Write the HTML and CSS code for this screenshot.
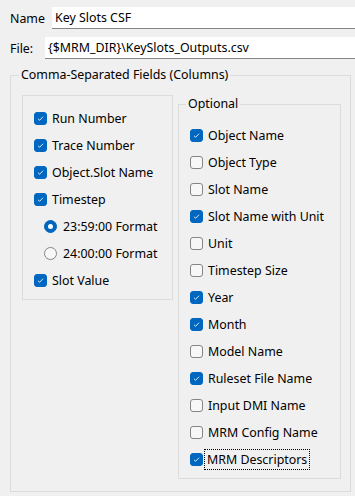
FILE: index.html
```html
<!DOCTYPE html>
<html>
<head>
<meta charset="utf-8">
<link rel="stylesheet" href="styles.css">
</head>
<body>
<div class="form-row name-row">
  <label class="lbl name-lbl">Name</label>
  <div class="input">Key Slots CSF</div>
</div>
<div class="form-row file-row">
  <label class="lbl file-lbl">File:</label>
  <div class="input">{$MRM_DIR}\KeySlots_Outputs.csv</div>
</div>
<fieldset class="outer">
  <legend>Comma-Separated Fields (Columns)</legend>
  <div class="cols">
    <div class="box left">
      <div class="item"><span class="cb on"><svg viewBox="0 0 13 13"><path d="M3.5 6.8 L5.5 8.6 L9.5 4.4"/></svg></span><span>Run Number</span></div>
      <div class="item"><span class="cb on"><svg viewBox="0 0 13 13"><path d="M3.5 6.8 L5.5 8.6 L9.5 4.4"/></svg></span><span>Trace Number</span></div>
      <div class="item"><span class="cb on"><svg viewBox="0 0 13 13"><path d="M3.5 6.8 L5.5 8.6 L9.5 4.4"/></svg></span><span>Object.Slot Name</span></div>
      <div class="item"><span class="cb on"><svg viewBox="0 0 13 13"><path d="M3.5 6.8 L5.5 8.6 L9.5 4.4"/></svg></span><span>Timestep</span></div>
      <div class="item sub"><span class="rb on"></span><span>23:59:00 Format</span></div>
      <div class="item sub"><span class="rb"></span><span>24:00:00 Format</span></div>
      <div class="item"><span class="cb on"><svg viewBox="0 0 13 13"><path d="M3.5 6.8 L5.5 8.6 L9.5 4.4"/></svg></span><span>Slot Value</span></div>
    </div>
    <fieldset class="box right">
      <legend>Optional</legend>
      <div class="list">
        <div class="item"><span class="cb on"><svg viewBox="0 0 13 13"><path d="M3.5 6.8 L5.5 8.6 L9.5 4.4"/></svg></span><span>Object Name</span></div>
        <div class="item"><span class="cb"></span><span>Object Type</span></div>
        <div class="item"><span class="cb"></span><span>Slot Name</span></div>
        <div class="item"><span class="cb on"><svg viewBox="0 0 13 13"><path d="M3.5 6.8 L5.5 8.6 L9.5 4.4"/></svg></span><span>Slot Name with Unit</span></div>
        <div class="item"><span class="cb"></span><span>Unit</span></div>
        <div class="item"><span class="cb"></span><span>Timestep Size</span></div>
        <div class="item"><span class="cb on"><svg viewBox="0 0 13 13"><path d="M3.5 6.8 L5.5 8.6 L9.5 4.4"/></svg></span><span>Year</span></div>
        <div class="item"><span class="cb on"><svg viewBox="0 0 13 13"><path d="M3.5 6.8 L5.5 8.6 L9.5 4.4"/></svg></span><span>Month</span></div>
        <div class="item"><span class="cb"></span><span>Model Name</span></div>
        <div class="item"><span class="cb on"><svg viewBox="0 0 13 13"><path d="M3.5 6.8 L5.5 8.6 L9.5 4.4"/></svg></span><span>Ruleset File Name</span></div>
        <div class="item"><span class="cb"></span><span>Input DMI Name</span></div>
        <div class="item"><span class="cb"></span><span>MRM Config Name</span></div>
        <div class="item"><span class="cb on"><svg viewBox="0 0 13 13"><path d="M3.5 6.8 L5.5 8.6 L9.5 4.4"/></svg></span><span class="focus">MRM Descriptors</span></div>
      </div>
    </fieldset>
  </div>
</fieldset>
</body>
</html>
```

FILE: styles.css
```css
html, body {
  margin: 0;
  padding: 0;
}
body {
  background: #f0f0f0;
  font-family: "Noto Sans", "Open Sans", sans-serif;
  font-size: 12.4px;
  color: #000;
  height: 496px;
  display: flex;
  flex-direction: column;
  overflow: hidden;
}
.form-row {
  display: flex;
  align-items: center;
  height: 22px;
}
.name-row {
  margin-top: 7px;
}
.file-row {
  margin-top: 8px;
}
.lbl {
  padding-left: 10px;
  box-sizing: border-box;
  flex: none;
}
.name-lbl {
  width: 52px;
}
.file-lbl {
  width: 45px;
}
.input {
  flex: 1;
  height: 22px;
  box-sizing: border-box;
  background: #fff;
  border-bottom: 1px solid #858585;
  padding-left: 3px;
  line-height: 21px;
  white-space: nowrap;
  overflow: hidden;
}
fieldset {
  border: 1px solid #dcdcdc;
  margin: 0;
  padding: 0;
  min-width: 0;
}
legend {
  line-height: 16px;
  padding: 0 2px;
}
.outer {
  flex: 1;
  margin: 8px 4px 4px 10px;
}
.outer > legend {
  margin-left: 8px;
}
.cols {
  display: flex;
  align-items: flex-start;
  gap: 5px;
  padding: 12px 0 0 11px;
}
.box {
  box-sizing: border-box;
  border: 1px solid #dcdcdc;
}
.left {
  width: 151px;
  padding: 9px 0 5px 11px;
}
.right {
  width: 163px;
  margin-top: 1px;
}
.right > legend {
  margin-left: 7px;
}
.list {
  padding: 10px 0 5px 11px;
}
.item {
  height: 27px;
  display: flex;
  align-items: center;
  white-space: nowrap;
}
.item.sub {
  padding-left: 10px;
}
.cb {
  width: 13px;
  height: 13px;
  box-sizing: border-box;
  border: 1px solid #858585;
  border-radius: 3px;
  background: #f7f7f7;
  margin-right: 5px;
  flex: none;
  display: flex;
}
.cb.on {
  background: #0067c0;
  border-color: #0067c0;
}
.cb svg {
  width: 11px;
  height: 11px;
  fill: none;
  stroke: #fff;
  stroke-width: 1;
}
.rb {
  width: 13px;
  height: 13px;
  box-sizing: border-box;
  border: 1px solid #858585;
  border-radius: 50%;
  background: #f7f7f7;
  margin-right: 6px;
  flex: none;
  display: flex;
  align-items: center;
  justify-content: center;
}
.rb.on {
  background: #0067c0;
  border-color: #0067c0;
}
.rb.on::after {
  content: "";
  width: 5px;
  height: 5px;
  border-radius: 50%;
  background: #fff;
}
.focus {
  outline: 1px dotted #000;
  outline-offset: 1px;
  padding: 0 1px;
  margin-left: -2px;
}
```
